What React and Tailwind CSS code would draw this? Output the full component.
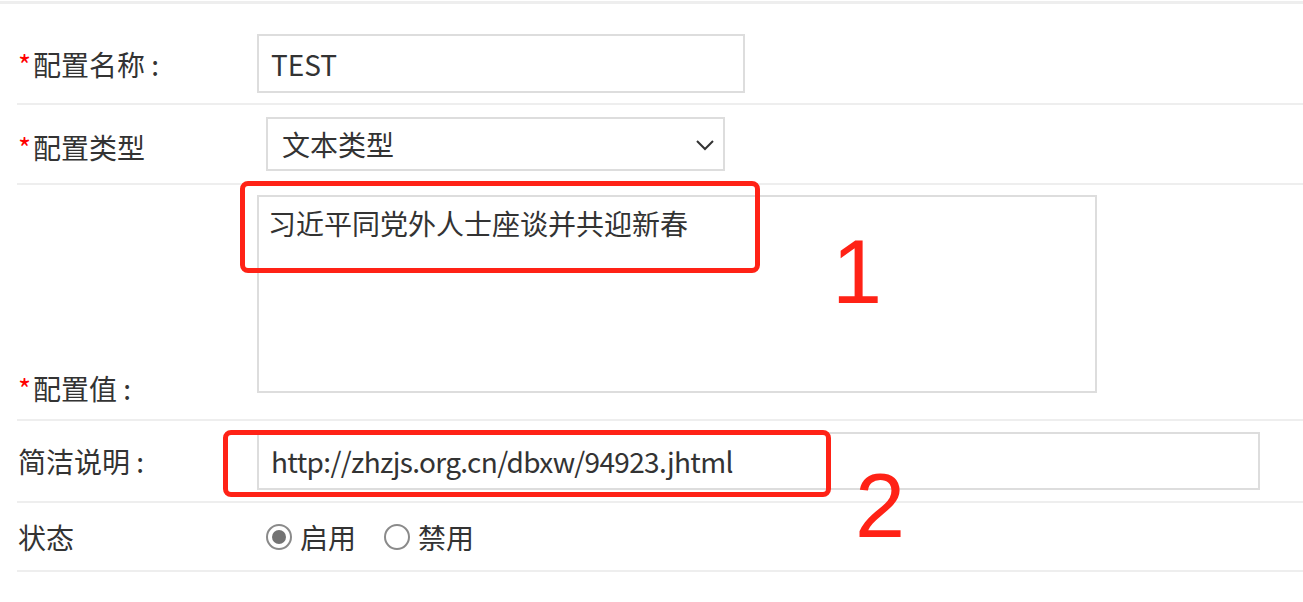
import React from 'react';

const Label = ({ required, children, className = '' }) => (
  <div className={`w-[240px] shrink-0 pl-[1px] leading-[40px] ${className}`}>
    {required && <span className="text-[#ff0000] mr-[2px]">*</span>}
    {children}
  </div>
);

const Radio = ({ checked, label }) => (
  <label className="flex items-center gap-[8px]">
    <span className="w-[26px] h-[26px] rounded-full border-2 border-[#8a8a8a] flex items-center justify-center bg-white">
      {checked && <span className="w-[14px] h-[14px] rounded-full bg-[#737373]" />}
    </span>
    <span className="leading-[40px]">{label}</span>
  </label>
);

export default function App() {
  return (
    <div className="relative w-[1303px] h-[602px] overflow-hidden bg-white text-[28px] text-[#333] font-['Noto_Sans_CJK_SC',sans-serif]">
      <div className="mt-[1px] h-[3px] bg-[#eeeeee]" />

      <div className="pl-[17px]">
        {/* 配置名称 */}
        <div className="flex items-center pt-[30px] pb-[10px] border-b-2 border-[#eeeeee]">
          <Label required>配置名称 :</Label>
          <div className="w-[488px] h-[59px] border-2 border-[#dddddd] pl-[12px] flex items-center">
            TEST
          </div>
        </div>

        {/* 配置类型 */}
        <div className="flex items-center pt-[12px] pb-[12px] border-b-2 border-[#eeeeee]">
          <Label required className="mt-[6px]">配置类型</Label>
          <div className="relative ml-[9px] w-[459px] h-[54px] border-2 border-[#dddddd] pl-[14px] flex items-center">
            文本类型
            <svg className="absolute right-[8px] top-[20px]" width="20" height="12" viewBox="0 0 20 12" fill="none">
              <path d="M2 2l8 8 8-8" stroke="#333" strokeWidth="2" />
            </svg>
          </div>
        </div>

        {/* 配置值 */}
        <div className="flex items-end pt-[10px] border-b-2 border-[#eeeeee]">
          <Label required className="mb-[11px]">配置值 :</Label>
          <div className="mb-[26px] w-[840px] h-[198px] border-2 border-[#dddddd] pt-[6px] pl-[9px] leading-[40px]">
            习近平同党外人士座谈并共迎新春
          </div>
        </div>

        {/* 简洁说明 */}
        <div className="flex items-center pt-[11px] pb-[11px] border-b-2 border-[#eeeeee]">
          <Label>简洁说明 :</Label>
          <div className="w-[1003px] h-[58px] border-2 border-[#dddddd] pl-[12px] flex items-center tracking-[-0.65px]">
            http://zhzjs.org.cn/dbxw/94923.jhtml
          </div>
        </div>

        {/* 状态 */}
        <div className="flex items-center h-[69px] border-b-2 border-[#eeeeee]">
          <Label>状态</Label>
          <div className="ml-[9px] flex items-center gap-[28px]">
            <Radio checked label="启用" />
            <Radio label="禁用" />
          </div>
        </div>
      </div>

      {/* red annotations */}
      <div className="absolute left-[240px] top-[181px] w-[520px] h-[92px] border-[5px] border-[#ff2216] rounded-[8px]" />
      <div className="absolute left-[832px] top-[227px] text-[90px] leading-none text-[#ff2216] font-['Liberation_Sans',sans-serif]">1</div>
      <div className="absolute left-[223px] top-[430px] w-[608px] h-[67px] border-[5px] border-[#ff2216] rounded-[8px]" />
      <div className="absolute left-[855px] top-[461px] text-[90px] leading-none text-[#ff2216] font-['Liberation_Sans',sans-serif]">2</div>
    </div>
  );
}
